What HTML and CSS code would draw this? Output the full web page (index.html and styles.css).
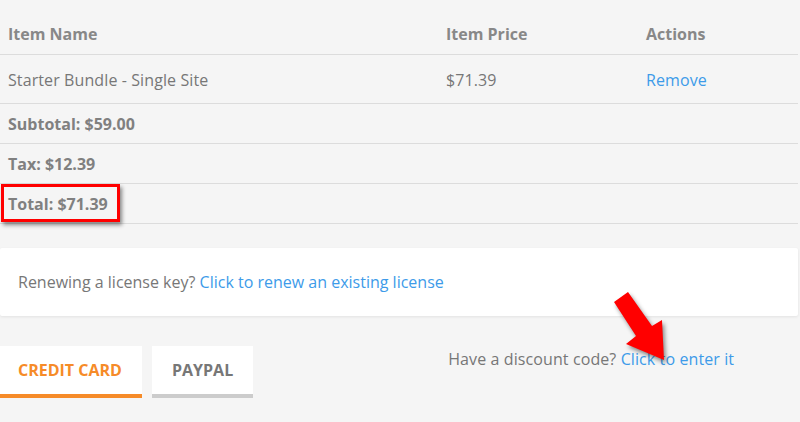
FILE: index.html
```html
<!DOCTYPE html>
<html lang="en">
<head>
    <meta charset="UTF-8">
    <meta name="viewport" content="width=device-width, initial-scale=1.0">
    <title>Checkout</title>
    <link rel="stylesheet" href="styles.css">
</head>
<body>
    <div class="checkout">
        <table class="cart">
            <thead>
                <tr>
                    <th class="col-name">Item Name</th>
                    <th class="col-price">Item Price</th>
                    <th class="col-actions">Actions</th>
                </tr>
            </thead>
            <tbody>
                <tr class="item-row">
                    <td>Starter Bundle - Single Site</td>
                    <td>$71.39</td>
                    <td><a href="#">Remove</a></td>
                </tr>
                <tr class="sum-row">
                    <th colspan="3">Subtotal: $59.00</th>
                </tr>
                <tr class="sum-row">
                    <th colspan="3">Tax: $12.39</th>
                </tr>
                <tr class="sum-row">
                    <th colspan="3"><span class="highlight">Total: $71.39</span></th>
                </tr>
            </tbody>
        </table>

        <div class="renew">
            <p>Renewing a license key? <a href="#">Click to renew an existing license</a></p>
        </div>

        <div class="payment">
            <div class="tabs">
                <a href="#" class="tab active">Credit Card</a>
                <a href="#" class="tab">PayPal</a>
            </div>
            <div class="discount">
                Have a discount code? <a href="#">Click to enter it</a>
                <!-- 注目用の矢印 -->
                <svg class="arrow" width="70" height="80" viewBox="0 0 70 80">
                    <polygon points="6,4 20,-6 44,28 54,22 56,62 18,46 28,38" transform="translate(2,8)" fill="#f00"/>
                </svg>
            </div>
        </div>
    </div>
</body>
</html>
```

FILE: styles.css
```css
body {
    margin: 0;
    background-color: #f5f5f5;
    font-family: "Open Sans", "Liberation Sans", sans-serif;
    color: #777;
    font-size: 16px;
}
a {
    color: #3d9be9;
    text-decoration: none;
}
.checkout {
    width: 798px;
}
.cart {
    width: 100%;
    border-collapse: collapse;
}
.cart th, .cart td {
    text-align: left;
    border-bottom: 1px solid #dcdcdc;
    padding: 0 8px;
}
.cart thead th {
    font-weight: bold;
    color: #888;
    padding-top: 23px;
    padding-bottom: 9px;
    line-height: 22px;
}
.col-name {
    width: 422px;
}
.col-price {
    width: 184px;
}
.item-row td {
    height: 46px;
    line-height: 22px;
    padding-top: 2px;
    padding-bottom: 0;
    letter-spacing: 0.1px;
}
.sum-row th {
    height: 39px;
    font-weight: bold;
    color: #808080;
}
.highlight {
    position: relative;
}
.highlight::after {
    content: "";
    position: absolute;
    left: -7px;
    right: -12px;
    top: -9px;
    bottom: -7px;
    border: 3px solid #f00;
    box-shadow: 2px 3px 4px rgba(0, 0, 0, 0.45);
}
.renew {
    margin-top: 24px;
    background-color: #fff;
    height: 68px;
    display: flex;
    align-items: center;
    padding: 0 18px;
    box-shadow: 0 1px 3px rgba(0, 0, 0, 0.08);
    border-radius: 2px;
}
.renew p {
    margin: 0;
}
.payment {
    display: flex;
    margin-top: 30px;
}
.tabs {
    display: flex;
    gap: 10px;
}
.tab {
    display: block;
    background-color: #fff;
    height: 48px;
    line-height: 48px;
    padding: 0 20px;
    font-size: 16px;
    font-weight: bold;
    text-transform: uppercase;
    color: #777;
    border-bottom: 4px solid #ccc;
}
.tab.active {
    color: #f68b28;
    border-bottom-color: #f68b28;
    padding: 0 18px;
    width: 106px;
}
.discount {
    position: relative;
    margin-left: 195px;
    padding-top: 2px;
    line-height: 22px;
    letter-spacing: 0.1px;
}
.arrow {
    position: absolute;
    left: 158px;
    top: -56px;
    filter: drop-shadow(2px 3px 2px rgba(0, 0, 0, 0.45));
}
```
